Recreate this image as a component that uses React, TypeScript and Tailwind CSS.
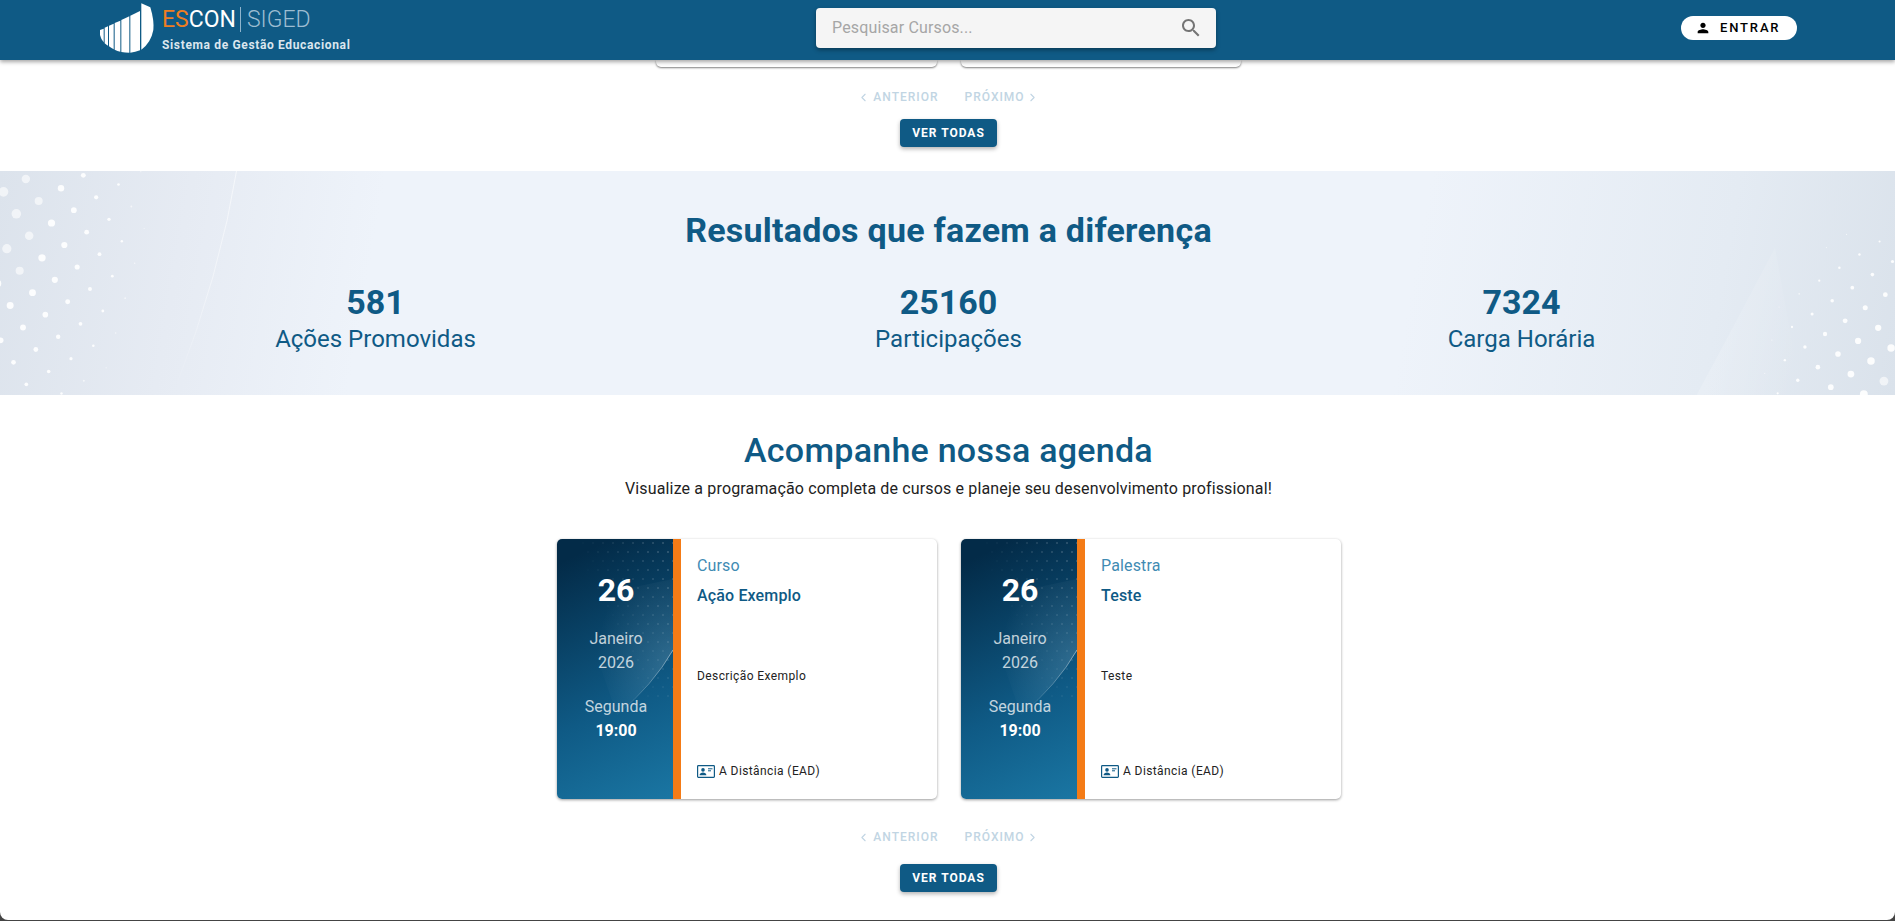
import { ChevronLeft, ChevronRight } from "lucide-react";

const BLUE = "#0f5a85";

type Dot = { x: number; y: number; r: number };

// Lattice of dots in the hero corners, coordinates taken at 3x
function buildDots(
  origin: [number, number],
  a: [number, number],
  b: [number, number],
  radius: (x: number, y: number) => number
) {
  const dots: Dot[] = [];
  for (let i = -14; i <= 14; i++) {
    for (let j = -14; j <= 14; j++) {
      const x = origin[0] + i * a[0] + j * b[0];
      const y = origin[1] + i * a[1] + j * b[1];
      const r = radius(x, y);
      if (x < -20 || x > 920 || y < 0 || y > 700 || r < 1.5) continue;
      dots.push({ x, y, r });
    }
  }
  return dots;
}

const leftDots = buildDots([116, 108], [-67, 38.5], [38.5, 66], (x, y) =>
  16 - Math.hypot(x / 30, (y - 150) / 50)
);
const rightDots = buildDots([871, 389], [-60.3, 39.3], [-21.5, 99.5], (x, y) =>
  15 - Math.hypot((900 - x) / 30, (700 - y) / 40)
);

const dotOpacity = (r: number) => (r > 12 ? 0.6 : r > 3 ? 0.9 : 0.6);

function LogoMark() {
  return (
    <svg viewBox="0 0 180 165" className="h-[55px] w-[60px] shrink-0" fill="#fff">
      <path d="M15 90 L26 86 L26 127 Q18 118 15 105 Z" />
      <path d="M29 83 L39 79 L39 137 Q33 134 29 130 Z" />
      <path d="M42 77 L56 71 L56 148 Q48 144 42 139 Z" />
      <path d="M59 69 L76 62 L76 155 Q67 153 59 149 Z" />
      <path d="M79 60 L103 49 L103 158 Q90 158 79 156 Z" />
      <path d="M106 47 L135 33 L135 151 Q121 156 106 158 Z" />
      <path d="M139 10 L166 22 Q178 62 175 90 Q168 128 139 149 Z" />
    </svg>
  );
}

function Pager() {
  return (
    <div className="flex h-5 items-center justify-center gap-[26px] pl-px text-[12px] font-medium tracking-[1px] text-[#c1d5e3]">
      <span className="flex items-center gap-[3px]">
        <ChevronLeft className="size-[13px]" strokeWidth={2} />
        ANTERIOR
      </span>
      <span className="flex items-center gap-px">
        PRÓXIMO
        <ChevronRight className="size-[13px]" strokeWidth={2} />
      </span>
    </div>
  );
}

function SeeAllButton() {
  return (
    <div className="flex justify-center pl-[2px]">
      <button className="h-7 w-[97px] rounded bg-[#0f5a85] text-[12px] font-bold tracking-[1px] text-white shadow-[0_2px_4px_rgba(0,0,0,0.3)]">
        VER TODAS
      </button>
    </div>
  );
}

function Stat({ value, label }: { value: string; label: string }) {
  return (
    <div className="text-center text-[#0f5a85]">
      <div className="text-[34px] leading-[40px] font-bold">{value}</div>
      <div className="mt-px text-[24px] leading-[32px]">{label}</div>
    </div>
  );
}

function DatePanelArt() {
  const dots: { x: number; y: number; o: number }[] = [];
  for (let row = 0; row < 18; row++) {
    for (let col = 0; col < 12; col++) {
      const x = 116 - col * 10 - (row % 2) * 5;
      const y = 4 + row * 9;
      const o = 0.22 - col * 0.022 - row * 0.008;
      if (x > 0 && o > 0.02) dots.push({ x, y, o });
    }
  }
  return (
    <svg viewBox="0 0 116 260" className="absolute inset-0 h-full w-full">
      <defs>
        <radialGradient id="glow" cx="1" cy="0.62" r="0.8">
          <stop offset="0" stopColor="#fff" stopOpacity="0.14" />
          <stop offset="1" stopColor="#fff" stopOpacity="0" />
        </radialGradient>
        <linearGradient id="arc" x1="1" y1="0" x2="0" y2="1">
          <stop offset="0" stopColor="#fff" stopOpacity="0.45" />
          <stop offset="1" stopColor="#fff" stopOpacity="0" />
        </linearGradient>
      </defs>
      <path d="M116 111 Q96 146 60 176 L20 60 L116 40 Z" fill="url(#glow)" />
      <path d="M116 111 Q96 146 60 176" fill="none" stroke="url(#arc)" strokeWidth="1" />
      {dots.map((d) => (
        <circle key={`${d.x}-${d.y}`} cx={d.x} cy={d.y} r="1" fill="#fff" opacity={d.o} />
      ))}
    </svg>
  );
}

function ModalityIcon() {
  return (
    <svg viewBox="0 0 18 13" className="h-[13px] w-[18px] shrink-0">
      <rect x="0.6" y="0.6" width="16.8" height="11.8" rx="0.8" fill="none" stroke={BLUE} strokeWidth="1.2" />
      <circle cx="6" cy="4.9" r="1.8" fill={BLUE} />
      <path d="M2.6 10.3 C2.6 8.4 4.4 7.6 6 7.6 S9.4 8.4 9.4 10.3 Z" fill={BLUE} />
      <path d="M11 3.8 H15.5 M11 5.8 H14" stroke={BLUE} strokeWidth="1" />
    </svg>
  );
}

function AgendaCard({ type, title, description }: { type: string; title: string; description: string }) {
  return (
    <div className="flex h-[260px] w-[380px] overflow-hidden rounded-[5px] bg-white shadow-[0_1px_3px_rgba(0,0,0,0.4)]">
      <div className="relative flex w-[116px] shrink-0 flex-col items-center bg-[linear-gradient(155deg,#032b48_8%,#0f5a85_62%,#1a76a3_100%)] pl-[2px] text-white">
        <DatePanelArt />
        <div className="relative mt-[31px] text-[32px] leading-[40px] font-bold">26</div>
        <div className="relative mt-[17px] text-center text-[16px] leading-[24px] text-white/75">
          Janeiro
          <br />
          2026
        </div>
        <div className="relative mt-[20px] text-[16px] leading-[24px] text-white/75">Segunda</div>
        <div className="relative text-[16px] leading-[24px] font-bold">19:00</div>
      </div>
      <div className="w-2 shrink-0 bg-[#f47b16]" />
      <div className="flex flex-1 flex-col pl-4">
        <div className="mt-[15px] text-[16px] leading-6 tracking-[0.15px] text-[#3f8bb3]">{type}</div>
        <div className="mt-[6px] text-[16px] leading-6 font-medium tracking-[0.15px] text-[#0f5a85]">{title}</div>
        <div className="mt-[58px] text-[12px] leading-5 tracking-[0.4px] text-[#222]">{description}</div>
        <div className="mt-[75px] flex items-center gap-1 text-[12px] leading-5 tracking-[0.4px] text-[#222]">
          <ModalityIcon />
          A Distância (EAD)
        </div>
      </div>
    </div>
  );
}

export default function App() {
  return (
    <div className="flex h-[921px] flex-col overflow-hidden bg-[#444] font-['Roboto',sans-serif]">
      {/* Top bar */}
      <header className="relative z-10 flex h-[60px] shrink-0 items-center bg-[#0f5a85] pr-[98px] pl-[95px] shadow-[0_2px_4px_rgba(0,0,0,0.35)]">
        <div className="mb-[5px] flex w-[721px] items-center gap-[7px]">
          <LogoMark />
          <div className="flex flex-col">
            <div className="flex h-[34px] items-center text-[23px] leading-none">
              <span className="text-[#ef7d21]">ES</span>
              <span className="text-white">CON</span>
              <span className="mr-[6px] ml-1 h-[25px] w-px bg-[#8fb4cc]" />
              <span className="font-light text-[#9dbdd2]">SIGED</span>
            </div>
            <div className="text-[12px] leading-4 font-bold tracking-[0.65px] text-[#dbe6ee]">
              Sistema de Gestão Educacional
            </div>
          </div>
        </div>
        <div className="mb-1 flex h-10 w-[400px] items-center justify-between rounded bg-[#f5f5f5] pr-[13px] pl-4 shadow-[0_2px_4px_rgba(0,0,0,0.35)]">
          <span className="text-[16px] tracking-[0.15px] text-[#a6a6a6]">Pesquisar Cursos...</span>
          <svg viewBox="0 0 24 24" className="size-6" fill="#757575">
            <path d="M15.5 14h-.79l-.28-.27C15.41 12.59 16 11.11 16 9.5 16 5.91 13.09 3 9.5 3S3 5.91 3 9.5 5.91 16 9.5 16c1.61 0 3.09-.59 4.23-1.57l.27.28v.79l5 4.99L20.49 19l-4.99-5zm-6 0C7.01 14 5 11.99 5 9.5S7.01 5 9.5 5 14 7.01 14 9.5 11.99 14 9.5 14z" />
          </svg>
        </div>
        <button className="mb-1 ml-auto flex h-6 w-[116px] items-center gap-[9px] rounded-full bg-white pl-[14px] text-[13px] font-medium tracking-[1.85px] text-black">
          <svg viewBox="0 0 24 24" className="size-4" fill="#000">
            <path d="M12 12c2.21 0 4-1.79 4-4s-1.79-4-4-4-4 1.79-4 4 1.79 4 4 4zm0 2c-2.67 0-8 1.34-8 4v2h16v-2c0-2.66-5.33-4-8-4z" />
          </svg>
          ENTRAR
        </button>
      </header>

      <main className="flex-1 rounded-b-lg bg-white">
        {/* Previous list, scrolled under the top bar */}
        <div className="flex h-[7px] justify-center gap-6 pl-[2px]">
          <div className="h-full w-[281px] rounded-b-[5px] bg-white shadow-[0_1px_2px_rgba(0,0,0,0.5)]" />
          <div className="h-full w-[280px] rounded-b-[5px] bg-white shadow-[0_1px_2px_rgba(0,0,0,0.5)]" />
        </div>
        <div className="mt-5">
          <Pager />
        </div>
        <div className="mt-3">
          <SeeAllButton />
        </div>

        {/* Results */}
        <section className="relative mt-6 h-[224px] overflow-hidden bg-[linear-gradient(100deg,#dce3ec_0%,#e6ebf3_10%,#eef3fa_20%,#eef3fa_74%,#e4ebf3_90%,#dae2eb_100%)]">
          <svg viewBox="0 0 900 672" className="absolute top-0 left-0 h-[224px] w-[300px]">
            <defs>
              <linearGradient id="line" gradientUnits="userSpaceOnUse" x1="713" y1="0" x2="525" y2="654">
                <stop offset="0" stopColor="#fff" stopOpacity="0.6" />
                <stop offset="0.55" stopColor="#fff" stopOpacity="0.4" />
                <stop offset="1" stopColor="#fff" stopOpacity="0" />
              </linearGradient>
            </defs>
            <path d="M713 -18 Q660 312 525 654" fill="none" stroke="url(#line)" strokeWidth="3" />
            {leftDots.map((d) => (
              <circle key={`${d.x}-${d.y}`} cx={d.x} cy={d.y - 18} r={d.r} fill="#fff" opacity={dotOpacity(d.r)} />
            ))}
          </svg>
          <svg viewBox="0 0 900 672" className="absolute top-0 right-0 h-[224px] w-[300px]">
            <defs>
              <linearGradient id="sweep" gradientUnits="userSpaceOnUse" x1="330" y1="600" x2="600" y2="660">
                <stop offset="0" stopColor="#fff" stopOpacity="0.16" />
                <stop offset="1" stopColor="#fff" stopOpacity="0" />
              </linearGradient>
            </defs>
            <path d="M540 230 Q430 440 305 672 L620 672 Z" fill="url(#sweep)" />
            {rightDots.map((d) => (
              <circle key={`${d.x}-${d.y}`} cx={d.x} cy={d.y - 18} r={d.r} fill="#fff" opacity={dotOpacity(d.r)} />
            ))}
          </svg>
          <div className="relative pl-[2px]">
            <h2 className="pt-[38px] text-center text-[34px] leading-[42px] font-bold tracking-[0.25px] text-[#0f5a85]">
              Resultados que fazem a diferença
            </h2>
            <div className="mt-[31px] grid grid-cols-3 px-[87px]">
              <Stat value="581" label="Ações Promovidas" />
              <Stat value="25160" label="Participações" />
              <Stat value="7324" label="Carga Horária" />
            </div>
          </div>
        </section>

        {/* Agenda */}
        <section>
          <h2 className="pt-[34px] pl-[2px] text-center text-[34px] leading-[42px] font-medium tracking-[0.25px] text-[#0f5a85]">
            Acompanhe nossa agenda
          </h2>
          <p className="mt-[6px] pl-[2px] text-center text-[16px] leading-6 tracking-[0.15px] text-[#222]">
            Visualize a programação completa de cursos e planeje seu desenvolvimento profissional!
          </p>
          <div className="mt-[38px] flex justify-center gap-6 pl-[3px]">
            <AgendaCard type="Curso" title="Ação Exemplo" description="Descrição Exemplo" />
            <AgendaCard type="Palestra" title="Teste" description="Teste" />
          </div>
          <div className="mt-[28px]">
            <Pager />
          </div>
          <div className="mt-[17px]">
            <SeeAllButton />
          </div>
        </section>
      </main>
      <div className="h-px shrink-0" />
    </div>
  );
}
